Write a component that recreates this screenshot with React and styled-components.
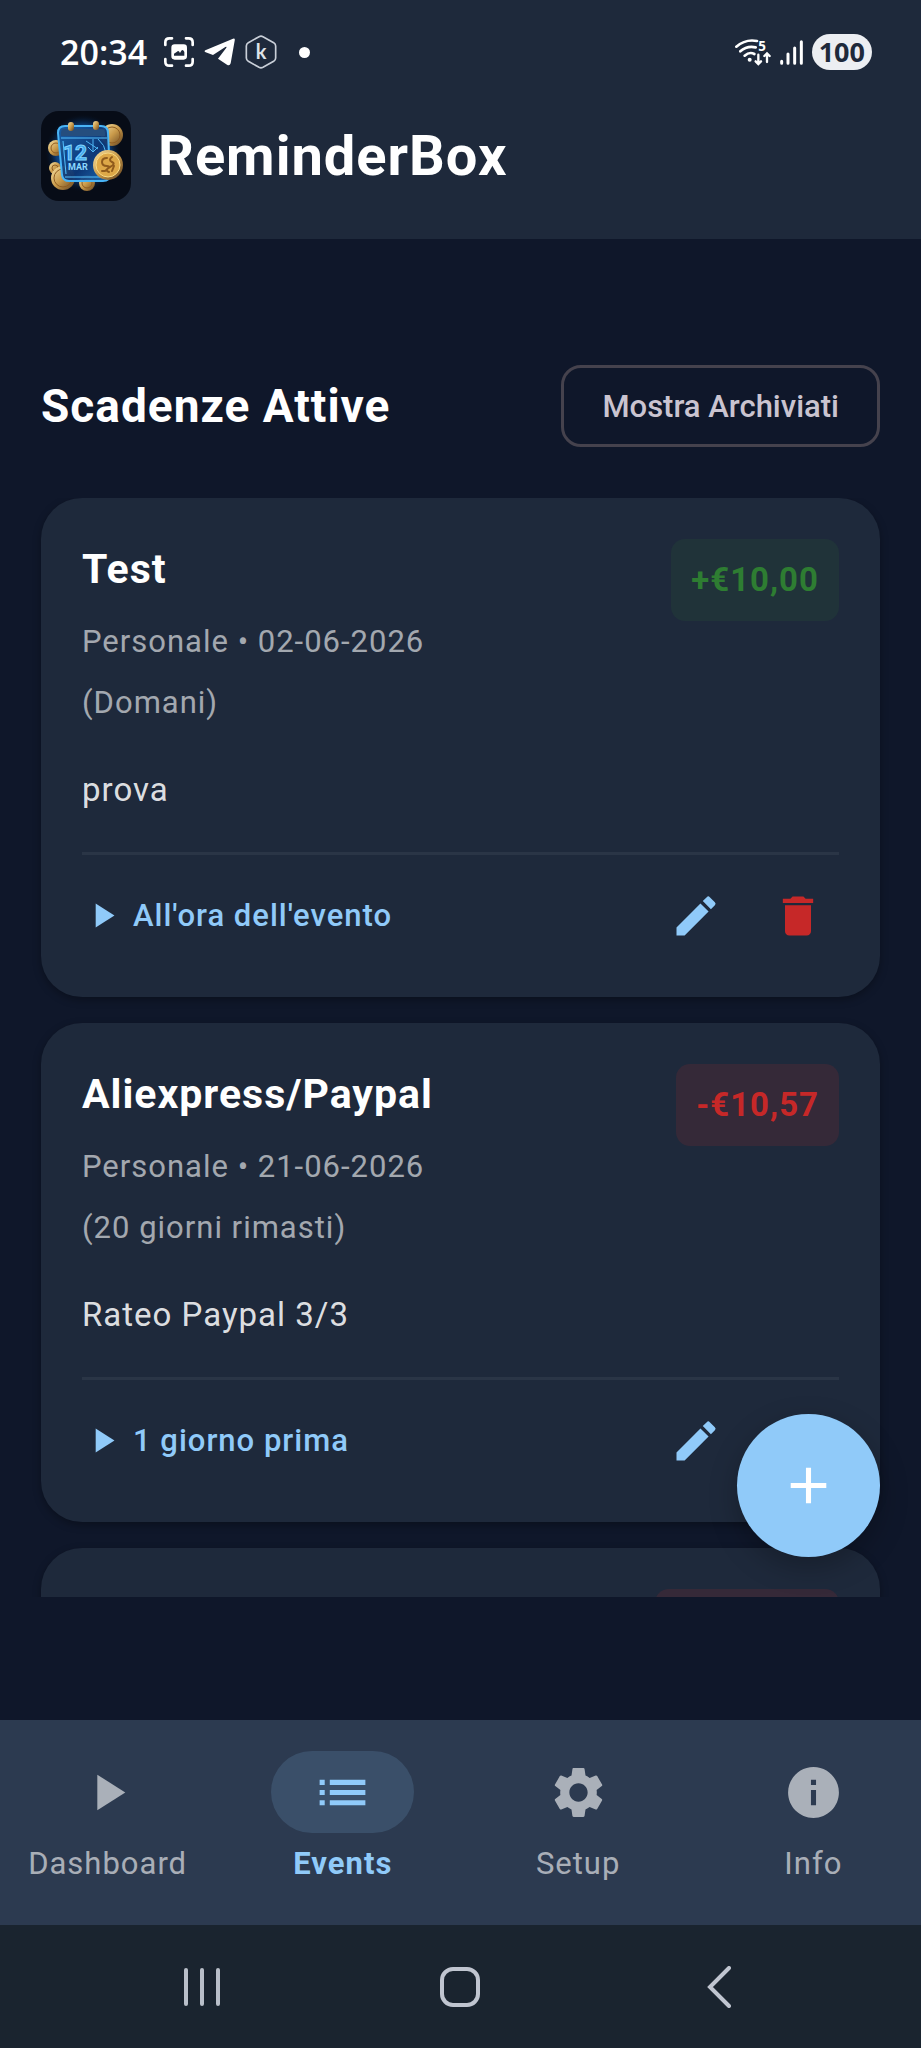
import React from "react";
import styled, { createGlobalStyle } from "styled-components";
import {
  MdAdd,
  MdDelete,
  MdEdit,
  MdInfo,
  MdList,
  MdPlayArrow,
  MdSettings,
} from "react-icons/md";

const GlobalStyle = createGlobalStyle`
  * {
    box-sizing: border-box;
  }
  body {
    margin: 0;
    background: #0f172a;
    color: #ffffff;
    font-family: Roboto, "Liberation Sans", sans-serif;
  }
  button {
    margin: 0;
    padding: 0;
    border: none;
    background: transparent;
    color: inherit;
    font: inherit;
    letter-spacing: inherit;
    cursor: pointer;
  }
  svg {
    display: block;
    flex: none;
  }
`;

const Page = styled.div`
  display: flex;
  flex-direction: column;
  height: 100vh;
  letter-spacing: 1px;
`;

const Header = styled.header`
  background: #1e293b;
`;

const StatusBar = styled.div`
  display: flex;
  align-items: center;
  justify-content: space-between;
  height: 104px;
  padding: 0 49px 0 60px;
  font-family: "Open Sans", "Noto Sans", sans-serif;
  letter-spacing: normal;
`;

const StatusGroup = styled.div`
  display: flex;
  align-items: center;
  gap: ${(p) => p.$gap};
`;

const Clock = styled.span`
  margin-right: 7px;
  font-size: 34px;
  font-weight: 600;
  line-height: 40px;
`;

const Dot = styled.span`
  width: 11px;
  height: 11px;
  margin-left: 12px;
  border-radius: 50%;
  background: #ffffff;
`;

const Battery = styled.span`
  padding: 0 7px;
  border-radius: 18px;
  background: #eceef2;
  color: #1e293b;
  font-size: 27px;
  font-weight: 700;
  line-height: 36px;
`;

const TitleBar = styled.div`
  display: flex;
  align-items: center;
  gap: 27px;
  padding: 7px 41px 38px;
`;

const AppTitle = styled.h1`
  margin: 0;
  font-size: 56px;
  font-weight: 700;
  line-height: 90px;
`;

const Main = styled.main`
  flex: 1;
  display: flex;
  flex-direction: column;
  min-height: 0;
  padding: 126px 0 123px;
`;

const SectionHead = styled.div`
  display: flex;
  align-items: center;
  justify-content: space-between;
  padding: 0 41px;
  margin-bottom: 51px;
`;

const SectionTitle = styled.h2`
  margin: 0;
  font-size: 46px;
  font-weight: 700;
  line-height: 61px;
`;

const OutlineButton = styled.button`
  height: 82px;
  padding: 0 38px;
  border: 3px solid #45424d;
  border-radius: 20px;
  color: #cac4d0;
  font-size: 31px;
  font-weight: 500;
  letter-spacing: normal;
`;

const ListArea = styled.div`
  position: relative;
  flex: 1;
  min-height: 0;
  overflow: hidden;
`;

const List = styled.div`
  display: flex;
  flex-direction: column;
  gap: 26px;
  padding: 0 41px;
`;

const Card = styled.article`
  flex: none;
  min-height: 499px;
  padding: 41px;
  border-radius: 41px;
  background: #1e293b;
  box-shadow: 0 3px 8px rgba(0, 0, 0, 0.3);
`;

const CardTop = styled.div`
  display: flex;
  align-items: flex-start;
  justify-content: space-between;
`;

const CardTitle = styled.h3`
  margin: 0 0 11px;
  font-size: 41px;
  font-weight: 700;
  line-height: 61px;
`;

const Meta = styled.p`
  margin: 0;
  color: rgba(255, 255, 255, 0.6);
  font-size: 31px;
  line-height: 61px;
`;

const Note = styled.p`
  margin: 26px 0 32px;
  color: rgba(255, 255, 255, 0.87);
  font-size: 33px;
  line-height: 61px;
`;

const Amount = styled.span`
  min-width: ${(p) => (p.$wide ? "184px" : "0")};
  height: 82px;
  padding: 0 20px;
  border-radius: 14px;
  background: ${(p) =>
    p.$income ? "rgba(46, 125, 50, 0.12)" : "rgba(198, 40, 40, 0.14)"};
  color: ${(p) => (p.$income ? "#2e7d32" : "#c62828")};
  font-size: 33px;
  font-weight: 700;
  line-height: 82px;
`;

const CardActions = styled.div`
  display: flex;
  align-items: center;
  gap: 20px;
  padding-top: 20px;
  border-top: 3px solid #2a3546;
`;

const Reminder = styled.button`
  display: flex;
  align-items: center;
  gap: 10px;
  margin-right: auto;
  color: #90caf9;
  font-size: 31px;
  font-weight: 500;
  line-height: 61px;
`;

const IconButton = styled.button`
  display: flex;
  align-items: center;
  justify-content: center;
  width: 82px;
  height: 81px;
  color: ${(p) => p.$color};
`;

const Fab = styled.button`
  position: absolute;
  right: 41px;
  bottom: 40px;
  display: flex;
  align-items: center;
  justify-content: center;
  width: 143px;
  height: 143px;
  border-radius: 50%;
  background: #90caf9;
  color: #ffffff;
  box-shadow: 0 10px 28px rgba(0, 0, 0, 0.25);
`;

const BottomNav = styled.nav`
  display: grid;
  grid-template-columns: repeat(4, 1fr);
  gap: 20px;
  padding: 31px 0;
  background: #2c3a50;
`;

const NavItem = styled.button`
  display: flex;
  flex-direction: column;
  align-items: center;
  color: ${(p) => (p.$active ? "#90caf9" : "rgba(255, 255, 255, 0.6)")};
  font-size: 31px;
  font-weight: ${(p) => (p.$active ? 700 : 400)};
  line-height: 61px;
`;

const NavPill = styled.span`
  display: flex;
  align-items: center;
  justify-content: center;
  width: 143px;
  height: 82px;
  border-radius: 41px;
  background: ${(p) =>
    p.$active ? "rgba(144, 202, 249, 0.15)" : "transparent"};
`;

const SystemNav = styled.div`
  display: grid;
  grid-template-columns: repeat(3, 1fr);
  height: 123px;
  padding: 0 73px;
  background: #1a242f;
`;

const SystemButton = styled.button`
  display: flex;
  align-items: center;
  justify-content: center;
`;

const CaptureIcon = () => (
  <svg width="30" height="30" viewBox="0 0 90 90" fill="none" stroke="#fff" strokeWidth="8" strokeLinecap="round">
    <path d="M4 24V16Q4 4 16 4H24M66 4H74Q86 4 86 16V24M86 66V74Q86 86 74 86H66M24 86H16Q4 86 4 74V66" />
    <path
      fill="#fff"
      stroke="none"
      fillRule="evenodd"
      d="M32 22H59Q69 22 69 32V58Q69 68 59 68H32Q22 68 22 58V32Q22 22 32 22ZM30 56H61V45Q56 34 51 43L48 48Q44 39 39 44L30 50Z"
    />
  </svg>
);

const PlaneIcon = () => (
  <svg width="31" height="28" viewBox="0 0 93 84" fill="#fff">
    <path d="M4 37 87 2Q94 0 92 8L80 76Q77 85 69 80L42 62 67 29Q69 25 64 27L27 51 5 43Q-1 40 4 37Z" />
  </svg>
);

const HexIcon = () => (
  <svg width="32" height="34" viewBox="0 0 96 102">
    <path
      d="M42 5 Q48 2 54 5 L86 23 Q92 27 92 33 V69 Q92 75 86 79 L54 97 Q48 100 42 97 L10 79 Q4 75 4 69 V33 Q4 27 10 23 Z"
      fill="none"
      stroke="#c9cfd8"
      strokeWidth="5"
    />
    <text x="48" y="73" fontFamily="Lato" fontSize="60" fontWeight="700" fill="#dfe3e8" textAnchor="middle">
      k
    </text>
  </svg>
);

const WifiIcon = () => (
  <svg width="36" height="36" viewBox="0 -12 108 108" fill="none" stroke="#fff" strokeWidth="8" strokeLinecap="round">
    <path d="M4 26Q32 2 66 9M16 40Q36 22 62 28M29 53Q44 40 58 48" />
    <circle cx="44" cy="65" r="6" fill="#fff" stroke="none" />
    <path d="M70 50V78M62 70 70 78 78 70M96 72V46M88 54 96 46 104 54" strokeWidth="7" />
    <text x="70" y="38" fontSize="40" fontWeight="700" fill="#fff" stroke="none">
      5
    </text>
  </svg>
);

const SignalIcon = () => (
  <svg width="23" height="25" viewBox="0 0 69 75" stroke="#fff" strokeWidth="9" strokeLinecap="round">
    <path d="M5 64V70M24 42V70M44 24V70M64 5V70" />
  </svg>
);

const coins = [
  { x: 71, y: 24, r: 11 },
  { x: 15, y: 37, r: 8 },
  { x: 14, y: 57, r: 6 },
  { x: 22, y: 67, r: 12 },
  { x: 46, y: 72, r: 8 },
];

const AppLogo = () => (
  <svg width="90" height="90" viewBox="0 0 90 90">
    <defs>
      <radialGradient id="glow">
        <stop offset="0" stopColor="#1f95f5" />
        <stop offset="0.7" stopColor="#0c4a94" stopOpacity="0.8" />
        <stop offset="1" stopColor="#06101f" stopOpacity="0" />
      </radialGradient>
      <linearGradient id="gold" x1="0" y1="0" x2="1" y2="1">
        <stop offset="0" stopColor="#f6e2a4" />
        <stop offset="0.5" stopColor="#c99a4a" />
        <stop offset="1" stopColor="#5f3f1e" />
      </linearGradient>
      <linearGradient id="sheet" x1="0" y1="0" x2="1" y2="1">
        <stop offset="0" stopColor="#1a62ab" />
        <stop offset="0.6" stopColor="#0c3472" />
        <stop offset="1" stopColor="#1e70b8" />
      </linearGradient>
    </defs>
    <rect width="90" height="90" rx="18" fill="#070c17" />
    <ellipse cx="42" cy="42" rx="38" ry="39" fill="url(#glow)" />
    {coins.map((c) => (
      <g key={`${c.x}-${c.y}`}>
        <circle cx={c.x} cy={c.y} r={c.r} fill="url(#gold)" />
        <circle cx={c.x} cy={c.y} r={c.r - 3} fill="none" stroke="#8f5d22" strokeWidth="1" />
      </g>
    ))}
    <path
      d="M24 15H60Q67 15 67 22L69 63Q69 70 62 70H28Q22 70 21 64L17 22Q17 15 24 15Z"
      fill="url(#sheet)"
      fillOpacity="0.94"
      stroke="#49b4f6"
      strokeWidth="2"
    />
    <path d="M20 27H66M24 66H63M22 30 25 63" fill="none" stroke="#55c2ff" strokeWidth="1" />
    <path d="M23 18H61Q64 18 64 22V25H20V22Q20 18 23 18Z" fill="#254e7e" />
    <path d="M52 28V41M47 36 52 41 57 36M45 30 57 38M57 28Q64 34 65 42" fill="none" stroke="#4fb6f4" strokeWidth="1" />
    <text x="34" y="49" fontSize="21" fontWeight="700" fill="#3fa4ea" stroke="#7fd4ff" strokeWidth="1" textAnchor="middle" letterSpacing="0">
      12
    </text>
    <text x="37" y="59" fontSize="9" fontWeight="700" fill="#8bd8ff" textAnchor="middle" letterSpacing="0">
      MAR
    </text>
    <rect x="27" y="11" width="6" height="9" rx="3" fill="url(#gold)" />
    <rect x="52" y="10" width="6" height="9" rx="3" fill="url(#gold)" />
    <circle cx="67" cy="54" r="15" fill="url(#gold)" />
    <circle cx="67" cy="54" r="12" fill="#dda848" stroke="#f8da83" strokeWidth="1" />
    <path
      d="M66 47Q61 47 61 51T66 55 64 60H61M71 46Q67 49 71 51T69 56 68 61M73 55 71 60"
      fill="none"
      stroke="#8f5b1c"
      strokeWidth="2"
      strokeLinecap="round"
    />
  </svg>
);

const events = [
  {
    title: "Test",
    date: "Personale • 02-06-2026",
    left: "(Domani)",
    note: "prova",
    amount: "+€10,00",
    income: true,
    reminder: "All'ora dell'evento",
  },
  {
    title: "Aliexpress/Paypal",
    date: "Personale • 21-06-2026",
    left: "(20 giorni rimasti)",
    note: "Rateo Paypal 3/3",
    amount: "-€10,57",
    income: false,
    reminder: "1 giorno prima",
  },
];

const tabs = [
  { label: "Dashboard", icon: MdPlayArrow },
  { label: "Events", icon: MdList, active: true },
  { label: "Setup", icon: MdSettings },
  { label: "Info", icon: MdInfo },
];

function EventCard({ event }) {
  return (
    <Card>
      <CardTop>
        <div>
          <CardTitle>{event.title}</CardTitle>
          <Meta>{event.date}</Meta>
          <Meta>{event.left}</Meta>
        </div>
        <Amount $income={event.income}>{event.amount}</Amount>
      </CardTop>
      <Note>{event.note}</Note>
      <CardActions>
        <Reminder>
          <MdPlayArrow size={41} />
          {event.reminder}
        </Reminder>
        <IconButton $color="#90caf9" aria-label="Modifica">
          <MdEdit size={52} />
        </IconButton>
        <IconButton $color="#c62828" aria-label="Elimina">
          <MdDelete size={52} />
        </IconButton>
      </CardActions>
    </Card>
  );
}

function App() {
  return (
    <Page>
      <GlobalStyle />
      <Header>
        <StatusBar>
          <StatusGroup $gap="10px">
            <Clock>20:34</Clock>
            <CaptureIcon />
            <PlaneIcon />
            <HexIcon />
            <Dot />
          </StatusGroup>
          <StatusGroup $gap="9px">
            <WifiIcon />
            <SignalIcon />
            <Battery>100</Battery>
          </StatusGroup>
        </StatusBar>
        <TitleBar>
          <AppLogo />
          <AppTitle>ReminderBox</AppTitle>
        </TitleBar>
      </Header>

      <Main>
        <SectionHead>
          <SectionTitle>Scadenze Attive</SectionTitle>
          <OutlineButton>Mostra Archiviati</OutlineButton>
        </SectionHead>
        <ListArea>
          <List>
            {events.map((event) => (
              <EventCard key={event.title} event={event} />
            ))}
            {/* next card, only its top edge shows above the fold */}
            <Card>
              <CardTop>
                <div />
                <Amount $wide />
              </CardTop>
            </Card>
          </List>
          <Fab aria-label="Aggiungi">
            <MdAdd size={61} />
          </Fab>
        </ListArea>
      </Main>

      <BottomNav>
        {tabs.map(({ label, icon: Icon, active }) => (
          <NavItem key={label} $active={active}>
            <NavPill $active={active}>
              <Icon size={61} />
            </NavPill>
            {label}
          </NavItem>
        ))}
      </BottomNav>

      <SystemNav>
        <SystemButton aria-label="Recenti">
          <svg width="38" height="40" viewBox="0 0 38 40" stroke="#b9bfc9" strokeWidth="4" strokeLinecap="round">
            <path d="M3 3V37M19 3V37M35 3V37" />
          </svg>
        </SystemButton>
        <SystemButton aria-label="Home">
          <svg width="40" height="40" viewBox="0 0 40 40" fill="none" stroke="#c0c5d0" strokeWidth="4">
            <rect x="2" y="2" width="36" height="36" rx="11" />
          </svg>
        </SystemButton>
        <SystemButton aria-label="Indietro">
          <svg width="24" height="42" viewBox="0 0 24 42" fill="none" stroke="#c0c5d0" strokeWidth="4" strokeLinecap="round">
            <path d="M22 2 3 21 22 40" />
          </svg>
        </SystemButton>
      </SystemNav>
    </Page>
  );
}

export default App;
